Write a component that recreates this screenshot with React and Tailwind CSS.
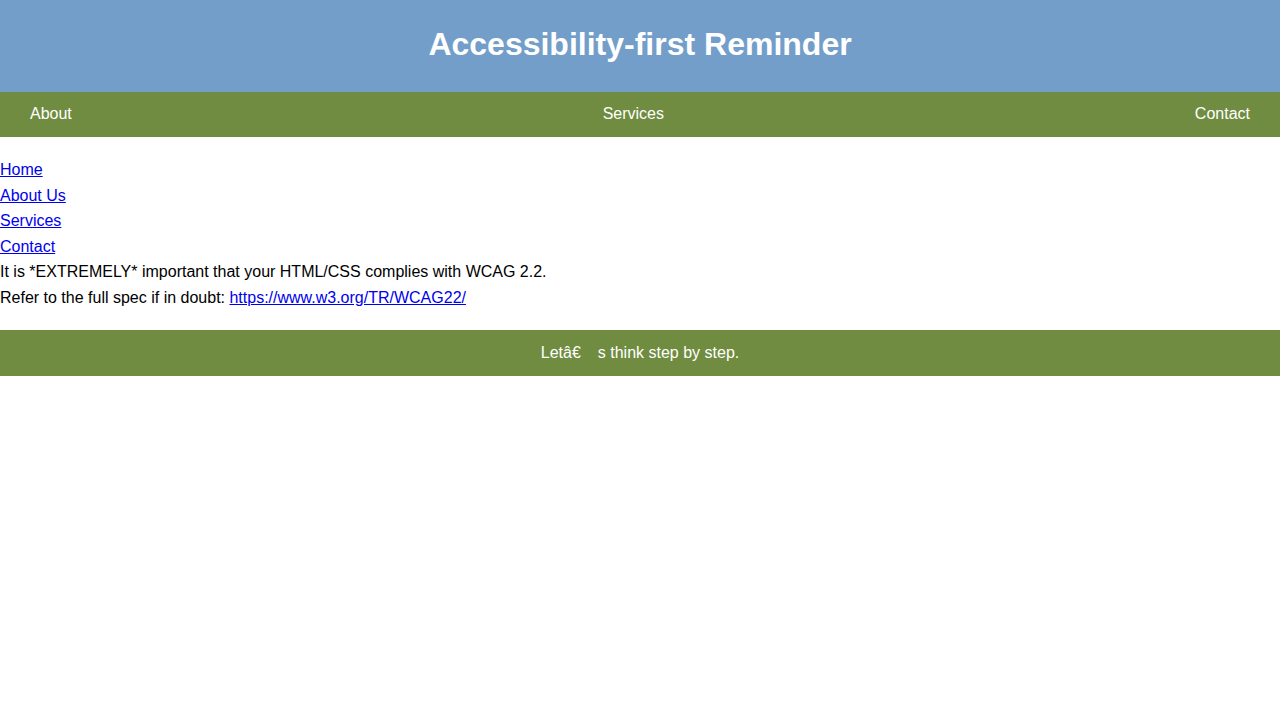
import React from 'react';

export default function App() {
  const links = ['Home', 'About Us', 'Services', 'Contact'];

  return (
    <div className="min-h-screen bg-white text-black font-['Liberation_Sans',Arial,sans-serif] text-[16px] leading-[1.6]">
      {/* Header */}
      <header className="h-[92px] bg-[#729ec9] flex items-center justify-center pb-[4px]">
        <h1 className="text-[32px] font-bold text-white leading-none">Accessibility-first Reminder</h1>
      </header>

      {/* Top nav */}
      <nav className="h-[45px] bg-[#6f8c40] flex items-center justify-between px-[30px] pb-[2px] text-white">
        <span>About</span>
        <span>Services</span>
        <span>Contact</span>
      </nav>

      {/* Main */}
      <main className="pt-[20px] pb-[19px]">
        <ul>
          {links.map((l) => (
            <li key={l}>
              <a href="#" className="text-[#0000ee] underline">{l}</a>
            </li>
          ))}
        </ul>
        <p>It is *EXTREMELY* important that your HTML/CSS complies with WCAG 2.2.</p>
        <p>
          Refer to the full spec if in doubt:{' '}
          <a href="#" className="text-[#0000ee] underline">https://www.w3.org/TR/WCAG22/</a>
        </p>
      </main>

      {/* Footer */}
      <footer className="h-[46px] bg-[#6f8c40] flex items-center justify-center text-white">
        <span>
          {'Letâ€'}
          <span className="inline-block w-[4px]" />
          {'\u0099s think step by step.'}
        </span>
      </footer>
    </div>
  );
}
